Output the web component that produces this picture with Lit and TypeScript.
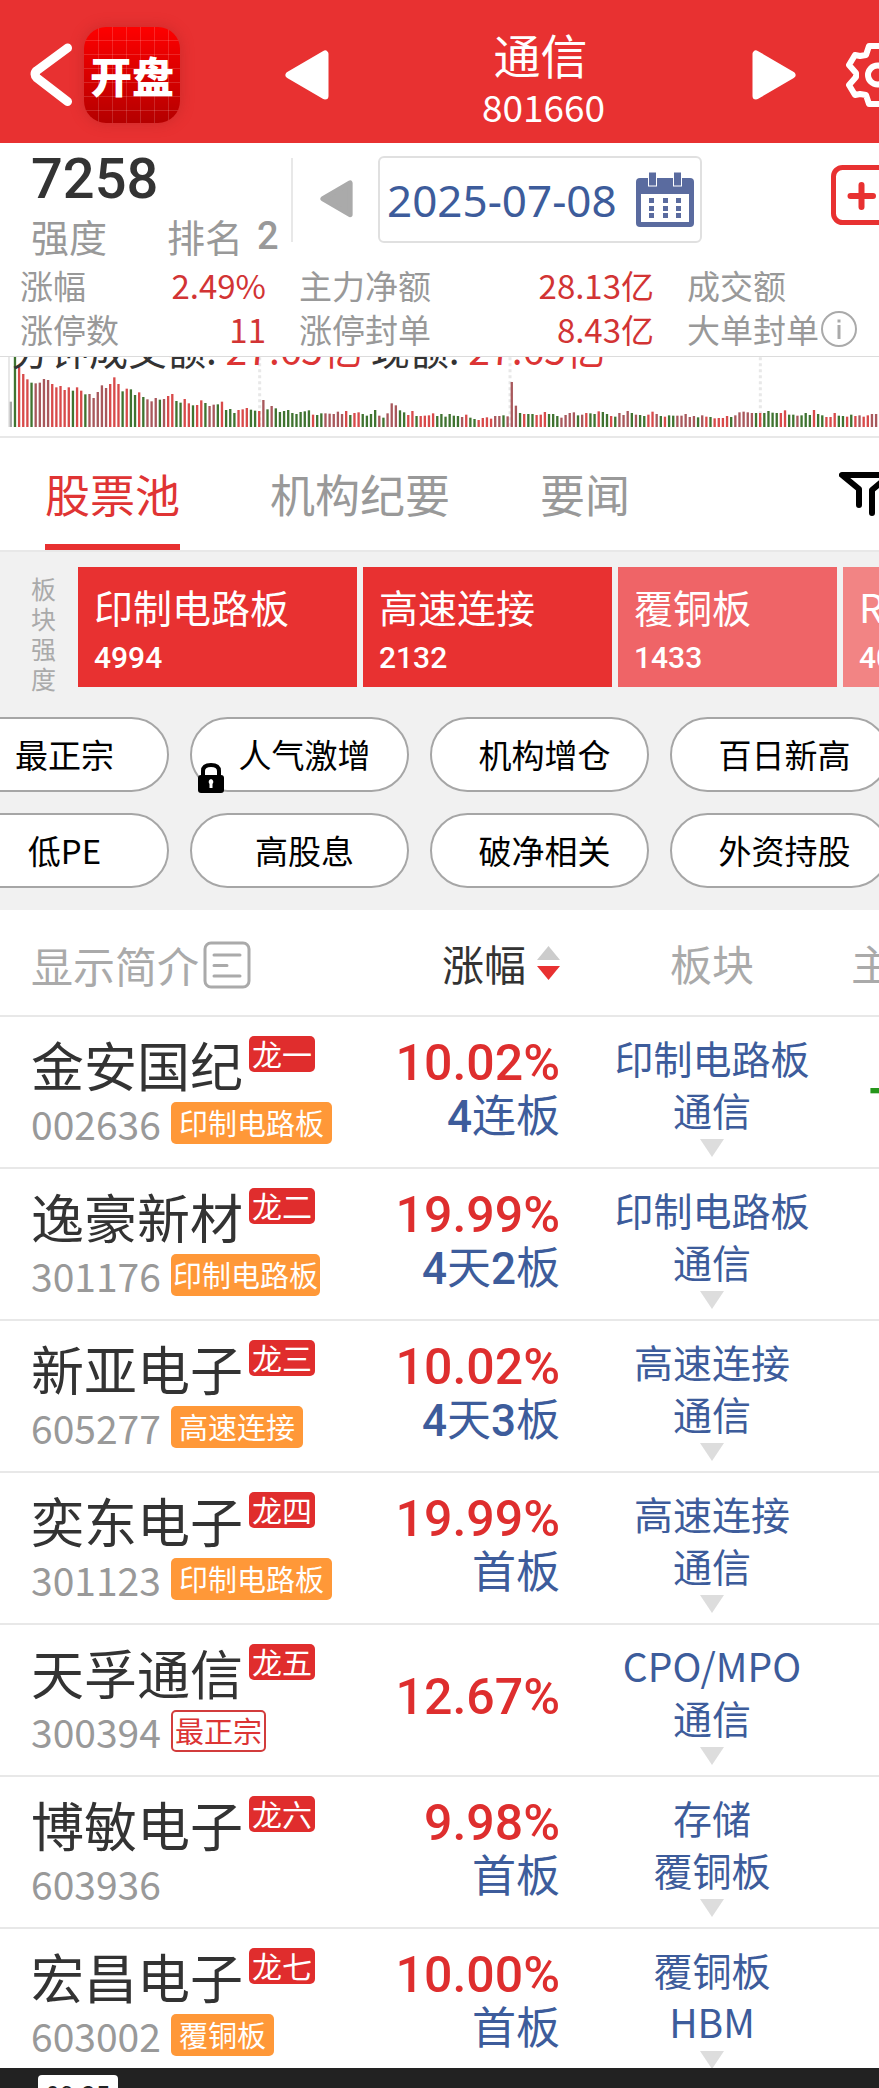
import { LitElement, html, css, svg, nothing } from "lit";
import { customElement, property } from "lit/decorators.js";

type Stock = {
  name: string;
  rank: string;
  code: string;
  tag?: string;
  tagKind?: "solid" | "tight" | "outline";
  change: string;
  streak?: string;
  sectors: string[];
  flow?: string;
};

const STOCKS: Stock[] = [
  { name: "金安国纪", rank: "龙一", code: "002636", tag: "印制电路板", change: "10.02%", streak: "4连板", sectors: ["印制电路板", "通信"], flow: "-" },
  { name: "逸豪新材", rank: "龙二", code: "301176", tag: "印制电路板", tagKind: "tight", change: "19.99%", streak: "4天2板", sectors: ["印制电路板", "通信"] },
  { name: "新亚电子", rank: "龙三", code: "605277", tag: "高速连接", change: "10.02%", streak: "4天3板", sectors: ["高速连接", "通信"] },
  { name: "奕东电子", rank: "龙四", code: "301123", tag: "印制电路板", change: "19.99%", streak: "首板", sectors: ["高速连接", "通信"] },
  { name: "天孚通信", rank: "龙五", code: "300394", tag: "最正宗", tagKind: "outline", change: "12.67%", sectors: ["CPO/MPO", "通信"] },
  { name: "博敏电子", rank: "龙六", code: "603936", change: "9.98%", streak: "首板", sectors: ["存储", "覆铜板"] },
  { name: "宏昌电子", rank: "龙七", code: "603002", tag: "覆铜板", change: "10.00%", streak: "首板", sectors: ["覆铜板", "HBM"] },
];

const SECTORS = [
  { name: "印制电路板", value: "4994", size: "wide" },
  { name: "高速连接", value: "2132", size: "mid" },
  { name: "覆铜板", value: "1433", size: "narrow soft" },
  { name: "RCC", value: "401", size: "narrow pale" },
];

const CHIPS = [
  ["最正宗", "人气激增", "机构增仓", "百日新高"],
  ["低PE", "高股息", "破净相关", "外资持股"],
];

/* Minute turnover bars: distance of each bar's top from the chart's upper edge. */
const BAR_TOPS = [
  185, 50, 78, 102, 118, 128, 130, 128, 117, 120, 132, 142, 138, 150, 142, 152, 142, 152, 163, 162, 174, 156, 136, 144, 132, 112,
  132, 154, 146, 148, 165, 157, 171, 178, 184, 174, 179, 177, 168, 162, 183, 188, 177, 190, 196, 195, 181, 189, 198, 194, 193, 185,
  210, 207, 219, 210, 208, 204, 209, 212, 213, 180, 208, 198, 205, 216, 213, 210, 219, 222, 216, 214, 211, 224, 225, 220, 220, 221,
  222, 215, 222, 213, 225, 219, 217, 222, 227, 222, 210, 227, 233, 220, 190, 196, 211, 217, 225, 213, 228, 228, 227, 226, 220, 228,
  222, 230, 222, 227, 228, 231, 224, 233, 237, 240, 234, 232, 236, 228, 228, 226, 229, 126, 197, 219, 222, 222, 222, 225, 224, 216,
  222, 222, 228, 233, 225, 219, 217, 226, 224, 219, 220, 222, 214, 216, 222, 228, 230, 219, 225, 213, 219, 224, 225, 228, 224, 215,
  222, 228, 230, 226, 227, 227, 227, 222, 231, 228, 232, 226, 230, 231, 235, 234, 234, 228, 231, 226, 217, 215, 217, 219, 219, 219,
  219, 213, 218, 219, 219, 211, 224, 224, 227, 226, 219, 225, 210, 222, 226, 231, 231, 219, 227, 228, 230, 224, 228, 226, 230, 226,
  222, 222,
];
const BAR_KINDS =
  "xgrrrgmmmmrrrrrgrrgmmmmmrrrgrggrgmmmgmrrggrrgrrgmmgrgggrrrggrmgmgggggggggrggmmmmmrgrrggggmgmmmggrrgrrrrg" +
  "gggggmrggrrrrmmgmmmgrggrrrgggmmmmgmrggrggrgmmmgmggrrmgrggmmmmmgmrgrrrrgmmmmmgrggggrrggmgggrggrrrggrgrmrrmm";
const BAR_COLORS: Record<string, string> = { x: "#a8a8a8", g: "#3f7330", r: "#d84a4a", m: "#a8585c" };

@customElement("volume-chart")
export class VolumeChart extends LitElement {
  static styles = css`
    :host { display: block; position: relative; box-sizing: border-box; height: 82px; overflow: hidden; border-top: 1px solid #dcdcdc; border-bottom: 2px solid #e8e8e8; }
    .bars { display: block; width: 100%; height: 70px; }
    .caption {
      position: absolute; left: 11px; bottom: 56px; margin: 0; white-space: nowrap;
      font-size: 39px; line-height: 64px; color: #333;
    }
    .num { color: #dc3434; }
  `;
  render() {
    return html`
      <svg class="bars" viewBox="0 51 2637 210" preserveAspectRatio="none" aria-hidden="true">
        <rect x="24" y="51" width="6" height="210" fill="#e8e8e8" />
        ${[779, 1530, 2281].map(
          (x) => svg`<line x1=${x} x2=${x} y1="52" y2="261" stroke="#e8e8e8" stroke-width="9" stroke-dasharray="9 9" />`
        )}
        ${BAR_TOPS.map(
          (top, i) => svg`<rect x=${29 + 12.42 * i} y=${top} width="7" height=${261 - top} fill=${BAR_COLORS[BAR_KINDS[i] ?? "r"]} />`
        )}
      </svg>
      <p class="caption">分钟成交额: <span class="num">27.65亿</span> 现额: <span class="num">27.65亿</span></p>
    `;
  }
}

@customElement("stock-table")
export class StockTable extends LitElement {
  @property({ attribute: false }) stocks: Stock[] = [];

  static styles = css`
    :host { display: block; overflow: hidden; background: #fff; }
    * { box-sizing: border-box; }
    button { font: inherit; color: inherit; background: none; border: 0; padding: 0; }
    .list { table-layout: fixed; border-collapse: separate; border-spacing: 0; width: 100%; min-width: 1050px; }
    .c-name { width: 360px; }
    .c-change { width: 240px; }
    .c-sector { width: 224px; }
    th, td { padding: 0; border-bottom: 2px solid #e8e8e8; white-space: nowrap; }
    th { height: 107px; font-size: 42px; font-weight: 400; color: #aaa; text-align: left; line-height: 60px; }
    td { height: 152px; vertical-align: top; }
    .intro { display: flex; align-items: center; gap: 4px; padding: 4px 0 0 31px; }
    .sort { display: flex; align-items: center; justify-content: flex-end; gap: 11px; width: 100%; padding-right: 40px; color: #333; }
    .center { text-align: center; }
    .flow-head { padding-left: 27px; }
    .name-cell { padding: 19px 0 0 31px; }
    .name-line { display: flex; align-items: flex-start; gap: 6px; }
    .name { font-size: 53px; line-height: 56px; color: #333; }
    .rank { border-radius: 5px; padding: 0 3px; font-size: 30px; line-height: 34px; height: 36px; background: #e02d2d; color: #fff; }
    .code-line { display: flex; align-items: center; gap: 10px; margin-top: 10px; height: 42px; }
    .code { font-size: 39px; line-height: 40px; color: #999; }
    .tag { height: 42px; border-radius: 5px; padding: 0 8px; font-size: 29px; line-height: 40px; background: #ff9838; color: #fff; }
    .tag.tight { padding: 0 2px; }
    .tag.outline { border: 2px solid #d23c3c; padding: 0 2px; line-height: 36px; background: #fff; color: #dc3434; }
    .change-cell { vertical-align: middle; text-align: right; padding: 0 40px 6px 0; font-family: Roboto, "Noto Sans CJK SC", sans-serif; line-height: 55px; }
    .change { font-size: 50px; font-weight: 500; color: #de2e2e; }
    .streak { font-size: 44px; line-height: 52px; color: #3d5c9b; }
    .days { font-weight: 500; }
    .sector-cell { padding-top: 14px; text-align: center; font-size: 39px; line-height: 52px; color: #3d5c9b; }
    .more { display: block; margin: 4px auto 0; }
    .flow-cell { padding-left: 44px; font-size: 50px; line-height: 132px; font-weight: 700; color: #26961c; }
  `;

  render() {
    return html`
      <table class="list">
        <colgroup><col class="c-name" /><col class="c-change" /><col class="c-sector" /><col /></colgroup>
        <thead>
          <tr>
            <th scope="col">
              <button class="intro">
                显示简介
                <svg width="48" height="48" viewBox="0 0 48 48" fill="none" stroke="#aaa" stroke-linecap="round" aria-hidden="true">
                  <rect x="2" y="2" width="44" height="44" rx="6" stroke-width="3" />
                  <path d="M11 14H37M11 24.500H24M11 35H37" stroke-width="3" />
                </svg>
              </button>
            </th>
            <th scope="col">
              <button class="sort">
                涨幅
                <svg width="23" height="34" viewBox="0 0 23 34" aria-hidden="true">
                  <path d="M11.500 0 23 14H0Z" fill="#ccc" /><path d="M0 20H23L11.500 34Z" fill="#e83131" />
                </svg>
              </button>
            </th>
            <th scope="col" class="center">板块</th>
            <th scope="col" class="flow-head">主力净额</th>
          </tr>
        </thead>
        <tbody>
          ${this.stocks.map(
            (s) => html`<tr>
              <td class="name-cell">
                <div class="name-line"><span class="name">${s.name}</span><span class="rank">${s.rank}</span></div>
                <div class="code-line">
                  <span class="code">${s.code}</span>
                  ${s.tag ? html`<span class="tag ${s.tagKind ?? "solid"}">${s.tag}</span>` : nothing}
                </div>
              </td>
              <td class="change-cell">
                <div class="change">${s.change}</div>
                ${s.streak
                  ? html`<div class="streak">${s.streak
                      .split(/(\d+)/)
                      .map((part) => (/\d/.test(part) ? html`<span class="days">${part}</span>` : part))}</div>`
                  : nothing}
              </td>
              <td class="sector-cell">
                ${s.sectors.map((name) => html`<div>${name}</div>`)}
                <svg class="more" width="24" height="18" viewBox="0 0 24 18" aria-hidden="true"><path d="M0 0H24L12 18Z" fill="#ddd" /></svg>
              </td>
              <td class="flow-cell">${s.flow ?? nothing}</td>
            </tr>`
          )}
        </tbody>
      </table>
    `;
  }
}

@customElement("app-root")
export class AppRoot extends LitElement {
  static styles = css`
    :host {
      display: flex; flex-direction: column; height: 100vh; overflow: hidden;
      background: #fff; color: #333; font-family: "Noto Sans CJK SC", sans-serif;
    }
    * { box-sizing: border-box; }
    button { font: inherit; color: inherit; background: none; border: 0; padding: 0; flex: none; }
    svg { display: block; flex: none; }
    .top, .info, .stats, .chart, .tabs, .filters, .foot { flex: none; }

    .top { display: flex; align-items: center; height: 143px; padding-top: 7px; background: #e83131; color: #fff; overflow: hidden; }
    .brand { display: flex; align-items: center; gap: 12px; flex: none; width: 285px; padding-left: 30px; }
    .logo {
      display: flex; align-items: center; justify-content: center; width: 96px; height: 96px; border-radius: 22px;
      font-size: 42px; font-weight: 900; line-height: 60px; color: #fff;
      background:
        repeating-linear-gradient(90deg, transparent 0 13px, #ffffff26 13px 14px) 1px 0,
        repeating-linear-gradient(180deg, transparent 0 13px, #ffffff26 13px 14px),
        linear-gradient(#fe0000, #b40000);
      box-shadow: 0 0 14px #a0202066;
    }
    .heading { flex: 1; padding-top: 7px; text-align: center; }
    .title { margin: 0; font-size: 47px; font-weight: 400; line-height: 54px; }
    .symbol { margin: 0; padding-left: 6px; font-size: 37px; line-height: 50px; }
    .gear { margin: 0 -30px 0 50px; }

    .info { display: flex; align-items: flex-start; height: 120px; padding-top: 12px; overflow: hidden; }
    .score-box { flex: none; width: 291px; padding-left: 31px; }
    .score { font-family: Roboto, sans-serif; font-size: 56px; font-weight: 500; line-height: 48px; color: #333; }
    .rank-line { display: flex; gap: 60px; margin-top: 8px; font-size: 38px; line-height: 50px; color: #999; }
    .rank-text { display: flex; gap: 14px; }
    .rank-num { font-family: Roboto, sans-serif; font-weight: 500; }
    .rule { flex: none; width: 2px; height: 84px; margin-top: 3px; background: #e8e8e8; }
    .earlier { margin: 25px 25px 0 27px; }
    .date {
      display: flex; align-items: center; justify-content: space-between; width: 324px; height: 87px; margin-top: 1px; padding: 0 6px 0 7px;
      border: 2px solid #e0e0e0; border-radius: 6px; background: #fff;
      font-family: "Noto Sans", sans-serif; font-size: 44px; line-height: 60px; color: #3d5c9b;
    }
    .add { margin: 10px -40px 0 auto; }

    .stats { display: grid; grid-template-columns: 246px 355px 1fr; align-content: start; column-gap: 33px; height: 93px; margin: 0; padding-left: 20px; font-size: 33px; line-height: 44px; }
    .stat { display: flex; justify-content: space-between; height: 44px; white-space: nowrap; }
    .stat dt { display: flex; align-items: center; gap: 2px; color: #999; }
    .stat dd { margin: 0; color: #d23434; }

    .tabs { display: flex; align-items: center; gap: 90px; height: 114px; padding-left: 45px; border-bottom: 2px solid #e8e8e8; overflow: hidden; font-size: 45px; color: #999; }
    .tab { display: flex; align-items: center; height: 112px; padding-bottom: 2px; }
    .tab.on { padding-top: 6px; border-bottom: 6px solid #e83131; color: #e03434; }
    .funnel { margin: 0 -14px 0 auto; }

    .filters { padding: 15px 0 22px; background: #f1f1f1; overflow: hidden; }
    .sectors { display: flex; height: 120px; margin-bottom: 30px; }
    .side { flex: none; width: 78px; padding: 6px 22px 0 31px; margin: 0; font-size: 25px; line-height: 30px; color: #aaa; word-break: break-all; }
    .tiles { display: flex; gap: 6px; }
    .tile { height: 120px; padding: 14px 16px; text-align: left; color: #fff; background: #e83131; }
    .wide { width: 279px; }
    .mid { width: 249px; }
    .narrow { width: 219px; }
    .soft { background: #ef6467; }
    .pale { background: #f28484; }
    .tile-name { display: block; font-size: 39px; line-height: 50px; }
    .tile-value { display: block; font-family: Roboto, sans-serif; font-size: 30px; font-weight: 500; line-height: 54px; }
    .rows { display: grid; gap: 21px; margin-left: -50px; }
    .chips { display: flex; gap: 21px; }
    .chip { position: relative; width: 219px; height: 75px; padding: 0 0 2px 10px; border: 2px solid #a6a6a6; border-radius: 38px; background: #fff; color: #000; font-size: 33px; line-height: 60px; }
    .lock { position: absolute; left: 6px; bottom: -3px; }

    .pool { flex: 1; min-height: 0; }
    .foot { height: 20px; padding: 7px 0 0 38px; background: #222; overflow: hidden; }
    .clock { display: block; width: 80px; height: 40px; border-radius: 4px; background: #fff; color: #222; text-align: center; font-size: 26px; line-height: 38px; }
  `;

  private triangle(size: number, color: string, flip = false) {
    return html`<svg width=${size} height=${(size * 50) / 44} viewBox="0 0 44 50" aria-hidden="true">
      <path
        d=${flip ? "M4 4V46L40 25Z" : "M40 4V46L4 25Z"}
        fill=${color} stroke=${color} stroke-width="7" stroke-linejoin="round"
      />
    </svg>`;
  }

  render() {
    return html`
      <header class="top">
        <div class="brand">
          <button aria-label="返回">
            <svg width="42" height="64" viewBox="0 0 42 64" fill="none" stroke="#fff" stroke-width="9" stroke-linecap="round" stroke-linejoin="round">
              <path d="M37.500 5 7 27.500Q3 31 7 35L37.500 58.500" />
            </svg>
          </button>
          <div class="logo">开盘</div>
        </div>
        <button aria-label="上一个">${this.triangle(44, "#fff")}</button>
        <div class="heading">
          <h1 class="title">通信</h1>
          <p class="symbol">801660</p>
        </div>
        <button aria-label="下一个">${this.triangle(44, "#fff", true)}</button>
        <button class="gear" aria-label="设置">
          <svg width="63" height="64" viewBox="0 0 63 64" fill="none" stroke="#fff" stroke-width="6" stroke-linejoin="round">
            <path d="M23 3H40L43 12 49 15 57 12 60 19 54 28V36L60 45 56 52 48 50 43 53 40 61H23L20 52 14 51 9 52 3 42 10 34V30L3 22 9 12 14 13 20 12Z" />
            <circle cx="31.500" cy="32" r="9.500" />
          </svg>
        </button>
      </header>

      <section class="info">
        <div class="score-box">
          <div class="score">7258</div>
          <div class="rank-line"><span>强度</span><span class="rank-text">排名 <span class="rank-num">2</span></span></div>
        </div>
        <div class="rule"></div>
        <button class="earlier" aria-label="前一天">${this.triangle(33, "#aaa")}</button>
        <button class="date">
          2025-07-08
          <svg width="58" height="56" viewBox="0 0 58 56" aria-hidden="true">
            <rect x="0" y="6" width="58" height="49" rx="4" fill="#5a6b9f" />
            <rect x="5" y="22" width="48" height="28" fill="#fff" />
            <g fill="#5a6b9f" stroke="#fff"><rect x="12.500" y="0" width="8" height="14" /><rect x="37.500" y="0" width="8" height="14" /></g>
            <g fill="#5a6b9f">
              ${[13, 27, 40].map((x) => [26, 34, 41].map((y) => svg`<rect x=${x} y=${y} width="5" height="5" />`))}
            </g>
          </svg>
        </button>
        <button class="add" aria-label="加自选">
          <svg width="88" height="60" viewBox="0 0 88 60" fill="none" stroke="#e83131" stroke-width="5" stroke-linecap="round">
            <rect x="2.500" y="2.500" width="83" height="55" rx="9" /><path d="M19.500 31H42M30.500 20V42" stroke-width="6" />
          </svg>
        </button>
      </section>

      <dl class="stats">
        <div class="stat"><dt>涨幅</dt><dd>2.49%</dd></div>
        <div class="stat"><dt>主力净额</dt><dd>28.13亿</dd></div>
        <div class="stat"><dt>成交额</dt></div>
        <div class="stat"><dt>涨停数</dt><dd>11</dd></div>
        <div class="stat"><dt>涨停封单</dt><dd>8.43亿</dd></div>
        <div class="stat">
          <dt>大单封单
            <svg width="36" height="36" viewBox="0 0 36 36" fill="none" stroke="#aaa" stroke-width="2" aria-hidden="true">
              <circle cx="18" cy="18" r="17" /><path d="M18 14V28" stroke-width="3" /><path d="M18 8.500V11.500" stroke-width="3" />
            </svg>
          </dt>
        </div>
      </dl>

      <volume-chart class="chart"></volume-chart>

      <nav class="tabs">
        <button class="tab on">股票池</button>
        <button class="tab">机构纪要</button>
        <button class="tab">要闻</button>
        <button class="funnel" aria-label="筛选">
          <svg width="54" height="46" viewBox="0 0 54 46" fill="none" stroke="#000" stroke-width="6" stroke-linecap="round" stroke-linejoin="round">
            <path d="M20 34V18L3 4H51L33 19V42" />
          </svg>
        </button>
      </nav>

      <section class="filters">
        <div class="sectors">
          <p class="side">板块强度</p>
          <div class="tiles">
            ${SECTORS.map(
              (s) => html`<button class="tile ${s.size}"><span class="tile-name">${s.name}</span><span class="tile-value">${s.value}</span></button>`
            )}
          </div>
        </div>
        <div class="rows">
          ${CHIPS.map(
            (row) => html`<div class="chips">
              ${row.map(
                (label) => html`<button class="chip">
                  ${label}
                  ${label === "人气激增"
                    ? html`<svg class="lock" width="26" height="30" viewBox="0 0 26 30" aria-hidden="true">
                        <path d="M5 14V8Q5 2 13 2T21 8V14" fill="none" stroke="#000" stroke-width="4" />
                        <rect y="12" width="26" height="18" rx="3" />
                        <path d="M13 16A3 3 0 0 1 14.500 21V25H11.500V21A3 3 0 0 1 13 16Z" fill="#fff" />
                      </svg>`
                    : nothing}
                </button>`
              )}
            </div>`
          )}
        </div>
      </section>

      <stock-table class="pool" .stocks=${STOCKS}></stock-table>

      <footer class="foot"><span class="clock">09:25</span></footer>
    `;
  }
}
